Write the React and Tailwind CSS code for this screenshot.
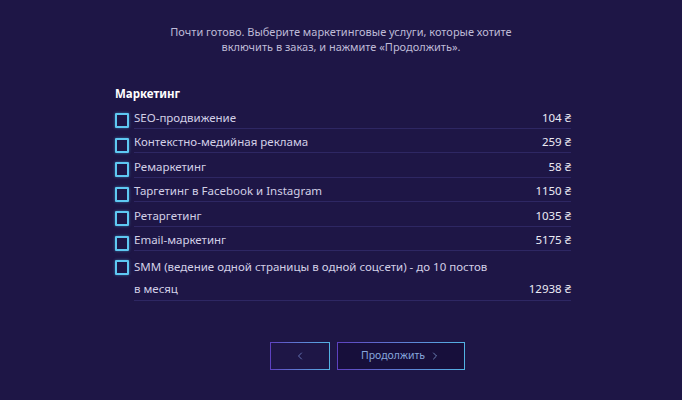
import { ChevronLeft, ChevronRight } from 'lucide-react'

const SERVICES = [
  { name: 'SEO-продвижение', price: '104' },
  { name: 'Контекстно-медийная реклама', price: '259' },
  { name: 'Ремаркетинг', price: '58' },
  { name: 'Таргетинг в Facebook и Instagram', price: '1150' },
  { name: 'Ретаргетинг', price: '1035' },
  { name: 'Email-маркетинг', price: '5175' },
  { name: 'SMM (ведение одной страницы в одной соцсети) - до 10 постов в месяц', price: '12938', tall: true },
]

// ── Service Row ──────────────────────────────────────────────
function ServiceRow({ item }) {
  return (
    <label className="flex items-start">
      <span className="mt-[9px] block h-[15px] w-[14px] shrink-0 rounded-[1px] border-2 border-[#5ec8f2] shadow-[0_0_3px_rgba(94,200,242,0.5)]" />
      <div
        className={`ml-[5px] flex flex-1 items-end justify-between border-b border-[#2e2763] ${
          item.tall ? 'pt-[5px]' : 'pt-[2.5px]'
        }`}
      >
        <span className={`max-w-[355px] text-[#d3d0e6] ${item.tall ? 'leading-[22px]' : 'leading-[21px]'}`}>
          {item.name}
        </span>
        <span className={`shrink-0 text-[#ecebf5] ${item.tall ? 'leading-[22px]' : 'leading-[21px]'}`}>
          {item.price} ₴
        </span>
      </div>
    </label>
  )
}

export default function App() {
  return (
    <div className="h-[400px] w-full overflow-hidden bg-[#1e1646] font-['Noto_Sans',sans-serif] text-[11px]">
      <p className="pt-[24px] text-center leading-[15px] text-[#bfbbd7]">
        Почти готово. Выберите маркетинговые услуги, которые хотите
        <br />
        включить в заказ, и нажмите «Продолжить».
      </p>

      <section className="ml-[115px] mt-[32px] w-[456px]">
        <h2 className="text-[11.5px] font-bold leading-[16px] text-white">Маркетинг</h2>
        <div className="mt-[2px] text-[11.5px]">
          {SERVICES.map((item) => (
            <ServiceRow key={item.name} item={item} />
          ))}
        </div>
      </section>

      <div className="ml-[270px] mt-[41px] flex gap-[7px]">
        <button className="h-[28px] w-[60px] bg-gradient-to-r from-[#5d40c0] to-[#52b3e3] p-px">
          <span className="flex h-full w-full items-center justify-center bg-[#1e1646]">
            <ChevronLeft className="h-[12px] w-[12px] text-[#7a8fd6]" strokeWidth={1.5} />
          </span>
        </button>
        <button className="h-[28px] w-[128px] bg-gradient-to-r from-[#5d40c0] to-[#52b3e3] p-px">
          <span className="flex h-full w-full items-center justify-center gap-[4px] bg-[#170f3b] text-[10.5px] text-[#86a6dc]">
            Продолжить
            <ChevronRight className="h-[12px] w-[12px] text-[#86a6dc]" strokeWidth={1.5} />
          </span>
        </button>
      </div>
    </div>
  )
}
